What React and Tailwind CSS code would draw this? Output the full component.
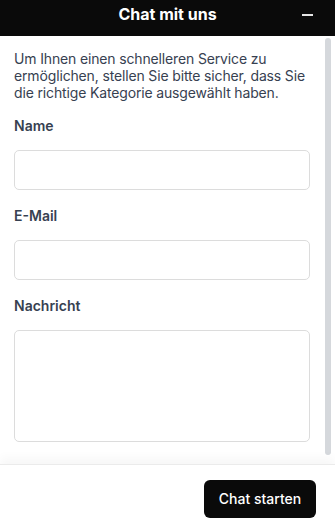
export default function App() {
  return (
    <div className="h-screen w-full flex flex-col bg-white overflow-hidden" style={{ fontFamily: "Inter, 'Noto Sans', sans-serif" }}>
      <header className="h-9 shrink-0 bg-[#0a0a0a] relative flex justify-center pt-[2px]">
        <h1 className="text-white font-bold text-base leading-6">Chat mit uns</h1>
        <button className="absolute right-[22px] top-[14px] w-[11px] h-[2px] bg-[#e5e5e5]" aria-label="Minimieren"></button>
      </header>
      <main className="relative flex-1 overflow-hidden">
        <div className="pl-[14px] pr-[25px] pt-[14px] pb-4">
          <p className="text-sm leading-[17px] tracking-[-0.15px] text-[#374151] mb-[15px] mr-[-8px]">
            Um Ihnen einen schnelleren Service zu ermöglichen, stellen Sie bitte sicher, dass Sie die richtige Kategorie ausgewählt haben.
          </p>
          <div className="flex flex-col gap-4">
            <div className="flex flex-col">
              <label className="text-sm leading-5 font-semibold text-[#374151] mb-[14px]">Name</label>
              <input className="h-10 w-full rounded-[5px] border border-[#dcdcdc] bg-white px-3 text-sm outline-none" />
            </div>
            <div className="flex flex-col">
              <label className="text-sm leading-5 font-semibold text-[#374151] mb-[14px]">E-Mail</label>
              <input className="h-10 w-full rounded-[5px] border border-[#dcdcdc] bg-white px-3 text-sm outline-none" />
            </div>
            <div className="flex flex-col">
              <label className="text-sm leading-5 font-semibold text-[#374151] mb-[14px]">Nachricht</label>
              <textarea className="h-[112px] w-full resize-none rounded-[5px] border border-[#dcdcdc] bg-white px-3 py-2 text-sm outline-none"></textarea>
            </div>
          </div>
        </div>
        <div className="absolute right-[4px] top-[2px] bottom-[9px] w-[6px] rounded-full bg-[#d5d8dc]"></div>
      </main>
      <footer className="h-[65px] shrink-0 border-t border-[#ebebeb] shadow-[0_-6px_10px_rgba(0,0,0,0.035)] flex justify-end items-start pt-[15px] pr-[19px] relative">
        <button className="h-[38px] w-[112px] rounded-md bg-[#0a0a0a] text-white text-sm font-medium">Chat starten</button>
      </footer>
    </div>
  );
}
